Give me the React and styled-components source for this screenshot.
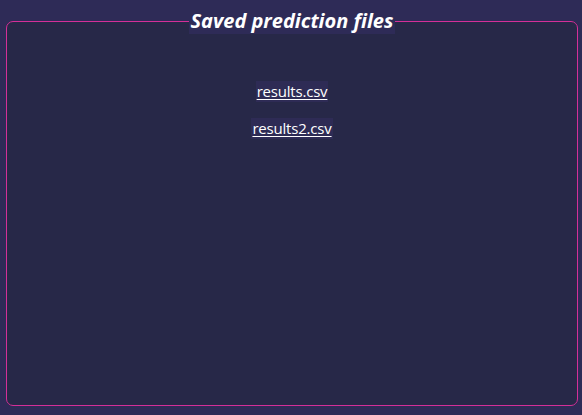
import * as React from "react";
import styled, { createGlobalStyle } from "styled-components";

const GlobalStyle = createGlobalStyle`
  html, body {
    margin: 0;
    height: 100%;
    background: #2e2b57;
  }
  #root {
    height: 100%;
  }
`

const Page = styled.div`
  box-sizing: border-box;
  height: 415px;
  padding: 8px 4px 9px 6px;
  background: #2e2b57;
  font-family: "Open Sans", "Noto Sans", sans-serif;
`

const Panel = styled.fieldset`
  box-sizing: border-box;
  height: 100%;
  margin: 0;
  padding: 0 10px;
  border: 1px solid #d42f98;
  border-radius: 7px;
  background: #272848;
`

const Legend = styled.legend`
  margin: 0 auto;
  padding: 0 2px;
  background: #2e2b57;
  color: #ffffff;
  font-size: 20px;
  font-weight: 700;
  font-style: italic;
  line-height: 26px;
`

const FileList = styled.div`
  display: flex;
  flex-direction: column;
  align-items: center;
  gap: 16px;
  padding-top: 47px;
`

const FileLink = styled.a`
  display: inline-block;
  padding: 0 1px;
  background: #2e2b55;
  color: #ffffff;
  font-size: 15px;
  line-height: 21px;
  letter-spacing: -0.2px;
  text-decoration: underline;
  text-underline-offset: 2px;
  cursor: pointer;
`

const files = ["results.csv", "results2.csv"];

export default function App() {
  return (
    <>
      <GlobalStyle />
      <Page>
        <Panel>
          <Legend>Saved prediction files</Legend>
          <FileList>
            {files.map((name) => (
              <FileLink key={name} href="#">{name}</FileLink>
            ))}
          </FileList>
        </Panel>
      </Page>
    </>
  );
}
